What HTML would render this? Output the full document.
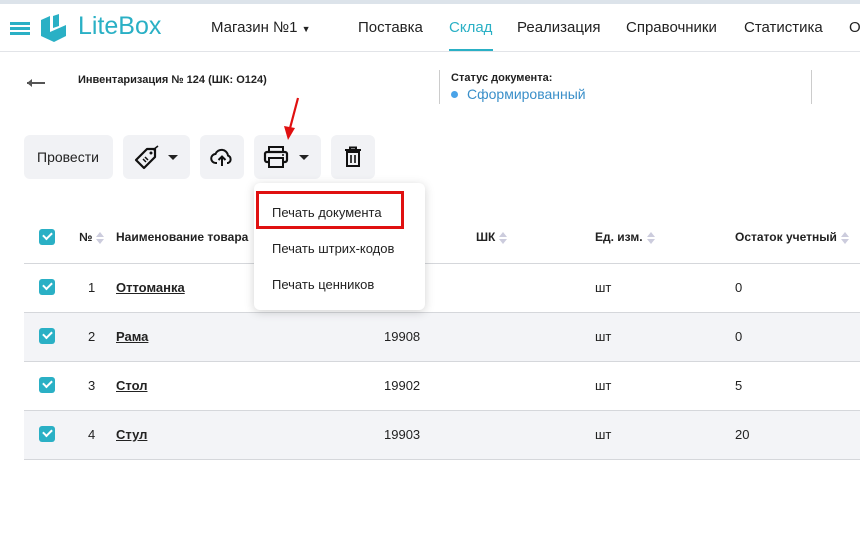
<!DOCTYPE html>
<html><head><meta charset="utf-8"><style>
*{box-sizing:border-box;margin:0;padding:0}
body{width:860px;height:542px;overflow:hidden;background:#fff;font-family:"Liberation Sans",Arial,sans-serif;color:#222;position:relative}
.a{position:absolute}
.top{left:0;top:0;width:860px;height:4px;background:#dce3ea}
.hdr{left:0;top:4px;width:860px;height:48px;border-bottom:1px solid #e2e4e8}
.nav{font-size:15px;color:#222;top:19px}
.btn{background:#f1f2f5;border-radius:6px;height:44px;top:135px}
.th{font-size:12px;font-weight:bold;color:#222;top:230px}
.cb{width:16px;height:16px;background:#2ab0c5;border-radius:3px}
.cb::after{content:"";position:absolute;left:4px;top:3px;width:7px;height:4px;border-left:2px solid #fff;border-bottom:2px solid #fff;transform:rotate(-45deg)}
.row{left:24px;width:836px;height:49px;border-bottom:1px solid #d5d7db}
.td{font-size:13px;top:16px}
.sort{display:inline-block;width:8px;height:12px;vertical-align:middle;margin-left:4px;position:relative}
.sort::before{content:"";position:absolute;top:0;left:0;border:4px solid transparent;border-bottom:5px solid #ccd;border-top:0}
.sort::after{content:"";position:absolute;bottom:0;left:0;border:4px solid transparent;border-top:5px solid #ccd;border-bottom:0}
.mi{font-size:13px;left:272px}
</style></head><body>
<div class="a top"></div>
<div class="a hdr"></div>
<div class="a" style="left:10px;top:22px;width:20px;height:3px;background:#2ab0c5;box-shadow:0 5px 0 #2ab0c5,0 10px 0 #2ab0c5;"></div>
<svg class="a" style="left:38px;top:12px" width="32" height="32" viewBox="0 0 32 32"><path d="M3 8 L12 4 L12 20 L28 13 L28 24 L16 30 L3 24 Z" fill="#2ab0c5"/><path d="M15 4 L21 2 L21 14 L15 16Z" fill="#2ab0c5"/></svg>
<div class="a" style="left:78px;top:12px;font-size:25px;color:#2ab0c5">LiteBox</div>
<div class="a nav" style="left:211px">Магазин №1 <span style="font-size:9px">▼</span></div>
<div class="a nav" style="left:358px">Поставка</div>
<div class="a nav" style="left:449px;color:#2ab0c5">Склад</div>
<div class="a" style="left:449px;top:49px;width:44px;height:2px;background:#2ab0c5"></div>
<div class="a nav" style="left:517px">Реализация</div>
<div class="a nav" style="left:626px">Справочники</div>
<div class="a nav" style="left:744px">Статистика</div>
<div class="a nav" style="left:849px">О</div>

<div class="a" style="left:27px;top:82px;width:18px;height:2px;background:#555"></div>
<div class="a" style="left:27px;top:79px;width:0;height:0;border:4px solid transparent;border-right:5px solid #555;border-left:0"></div>
<div class="a" style="left:78px;top:74px;font-size:11px;font-weight:bold">Инвентаризация № 124 (ШК: О124)</div>
<div class="a" style="left:439px;top:70px;width:1px;height:34px;background:#ccc"></div>
<div class="a" style="left:811px;top:70px;width:1px;height:34px;background:#ccc"></div>
<div class="a" style="left:451px;top:72px;font-size:11px;font-weight:bold">Статус документа:</div>
<div class="a" style="left:451px;top:91px;width:7px;height:7px;border-radius:50%;background:#4aa3e8"></div>
<div class="a" style="left:467px;top:86px;font-size:14px;color:#3a8fc9">Сформированный</div>

<div class="a btn" style="left:24px;width:89px"><div class="a" style="left:13px;top:14px;font-size:14px">Провести</div></div>
<div class="a btn" style="left:123px;width:67px">
<svg class="a" style="left:10px;top:10px" width="26" height="26" viewBox="0 0 26 26"><path d="M14 4 L22 4 L22 12 L11 23 L3 15 Z" fill="none" stroke="#111" stroke-width="2.2" stroke-linejoin="round"/><circle cx="18" cy="8" r="1.5" fill="#111"/><path d="M10 14 l3 3 M12 12 l3 3" stroke="#111" stroke-width="1.5"/><path d="M20 5 L25 1" stroke="#111" stroke-width="1.5"/></svg>
<div class="a" style="left:45px;top:20px;border:5px solid transparent;border-top:5px solid #222;border-bottom:0"></div></div>
<div class="a btn" style="left:200px;width:44px">
<svg class="a" style="left:10px;top:10px" width="24" height="24" viewBox="0 0 24 24"><path d="M7 18 H6 a4.5 4.5 0 0 1 -0.5 -9 a6.5 6.5 0 0 1 12.5 1.5 a4 4 0 0 1 0 7.5 H17" fill="none" stroke="#111" stroke-width="2"/><path d="M12 21 V12 M8.5 15 L12 11.5 L15.5 15" fill="none" stroke="#111" stroke-width="2"/></svg></div>
<div class="a btn" style="left:254px;width:67px">
<svg class="a" style="left:9px;top:10px" width="26" height="24" viewBox="0 0 26 24"><rect x="6" y="2" width="14" height="5" fill="none" stroke="#111" stroke-width="2"/><rect x="2" y="7" width="22" height="10" rx="2" fill="none" stroke="#111" stroke-width="2.2"/><rect x="6" y="13" width="14" height="9" fill="#f1f2f5" stroke="#111" stroke-width="2"/><circle cx="20" cy="10" r="1" fill="#111"/></svg>
<div class="a" style="left:45px;top:20px;border:5px solid transparent;border-top:5px solid #222;border-bottom:0"></div></div>
<div class="a btn" style="left:331px;width:44px">
<svg class="a" style="left:12px;top:11px" width="20" height="22" viewBox="0 0 20 22"><path d="M2 4 H18 M7 4 V1.5 H13 V4" fill="none" stroke="#111" stroke-width="2"/><rect x="4" y="6" width="12" height="14" fill="none" stroke="#111" stroke-width="2"/><path d="M8 9 V17 M12 9 V17" stroke="#111" stroke-width="1.6"/></svg></div>

<svg class="a" style="left:280px;top:96px" width="24" height="46" viewBox="0 0 24 46"><path d="M18 2 L9 36" stroke="#e01010" stroke-width="2.2"/><path d="M4 30 L8 44 L15 32 Z" fill="#e01010"/></svg>

<!-- table -->
<div class="a row" style="top:213px;height:51px"></div>
<div class="a cb" style="left:39px;top:229px"></div>
<div class="a th" style="left:79px">№<span class="sort"></span></div>
<div class="a th" style="left:116px">Наименование товара</div>
<div class="a th" style="left:476px">ШК<span class="sort"></span></div>
<div class="a th" style="left:595px">Ед. изм.<span class="sort"></span></div>
<div class="a th" style="left:735px">Остаток учетный<span class="sort"></span></div>

<div class="a row" style="top:264px"><div class="a cb" style="left:15px;top:15px"></div><div class="a td" style="left:64px">1</div><div class="a td" style="left:92px;font-weight:bold;text-decoration:underline">Оттоманка</div><div class="a td" style="left:571px">шт</div><div class="a td" style="left:711px">0</div></div>
<div class="a row" style="top:313px;background:#f3f4f7"><div class="a cb" style="left:15px;top:15px"></div><div class="a td" style="left:64px">2</div><div class="a td" style="left:92px;font-weight:bold;text-decoration:underline">Рама</div><div class="a td" style="left:360px">19908</div><div class="a td" style="left:571px">шт</div><div class="a td" style="left:711px">0</div></div>
<div class="a row" style="top:362px"><div class="a cb" style="left:15px;top:15px"></div><div class="a td" style="left:64px">3</div><div class="a td" style="left:92px;font-weight:bold;text-decoration:underline">Стол</div><div class="a td" style="left:360px">19902</div><div class="a td" style="left:571px">шт</div><div class="a td" style="left:711px">5</div></div>
<div class="a row" style="top:411px;background:#f3f4f7"><div class="a cb" style="left:15px;top:15px"></div><div class="a td" style="left:64px">4</div><div class="a td" style="left:92px;font-weight:bold;text-decoration:underline">Стул</div><div class="a td" style="left:360px">19903</div><div class="a td" style="left:571px">шт</div><div class="a td" style="left:711px">20</div></div>

<!-- dropdown -->
<div class="a" style="left:254px;top:183px;width:171px;height:127px;background:#fff;border-radius:6px;box-shadow:0 2px 10px rgba(0,0,0,.18)"></div>
<div class="a" style="left:256px;top:191px;width:148px;height:38px;border:3px solid #e01010"></div>
<div class="a mi" style="top:205px">Печать документа</div>
<div class="a mi" style="top:241px">Печать штрих-кодов</div>
<div class="a mi" style="top:277px">Печать ценников</div>
</body></html>
